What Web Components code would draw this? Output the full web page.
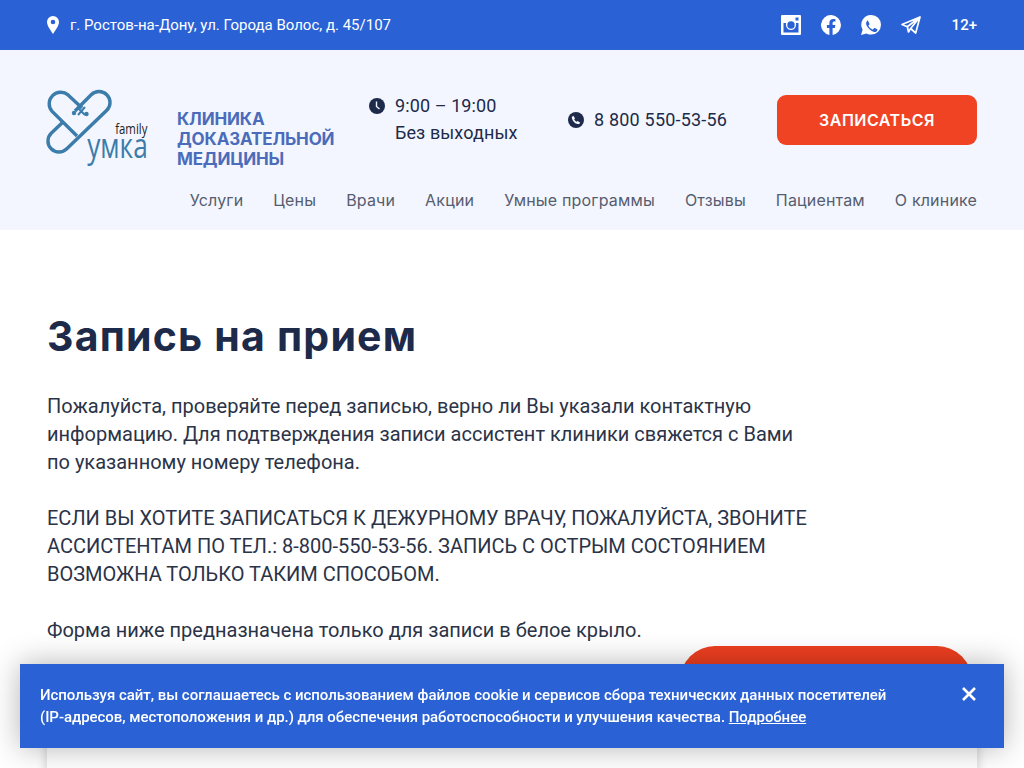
<!DOCTYPE html>
<html lang="ru">
<head>
<meta charset="utf-8">
<title>Запись на прием</title>
<style>
  html, body { margin: 0; height: 768px; overflow: hidden; background: #fff; }
  body { font-family: Roboto, "Liberation Sans", sans-serif; color: #1d2a4a; }
</style>
</head>
<body>
<top-bar></top-bar>
<site-header></site-header>
<main-content>
  <h1 slot="title">Запись на прием</h1>
  <p>Пожалуйста, проверяйте перед записью, верно ли Вы указали контактную информацию. Для подтверждения записи ассистент клиники свяжется с Вами по указанному номеру телефона.</p>
  <p>ЕСЛИ ВЫ ХОТИТЕ ЗАПИСАТЬСЯ К ДЕЖУРНОМУ ВРАЧУ, ПОЖАЛУЙСТА, ЗВОНИТЕ АССИСТЕНТАМ ПО ТЕЛ.: 8-800-550-53-56. ЗАПИСЬ С ОСТРЫМ СОСТОЯНИЕМ ВОЗМОЖНА ТОЛЬКО ТАКИМ СПОСОБОМ.</p>
  <p>Форма ниже предназначена только для записи в белое крыло.</p>
</main-content>
<cookie-banner>Используя сайт, вы соглашаетесь с использованием файлов cookie и сервисов сбора технических данных посетителей (IP-адресов, местоположения и др.) для обеспечения работоспособности и улучшения качества.</cookie-banner>

<script>
// small helper, every element just sets its shadow html once
class ShadowEl extends HTMLElement {
  constructor () {
    super()
    this.attachShadow({ mode: 'open' }).innerHTML = this.constructor.html
  }
}

customElements.define('top-bar', class extends ShadowEl {
  static html = `
  <style>
    :host { display: flex; align-items: center; height: 50px; padding: 0 47px; background: #2a62d6; color: #fff; font-size: 15px; }
    .addr { display: flex; align-items: center; gap: 11px; flex: 1; }
    .socials { display: flex; align-items: center; gap: 20px; }
    svg { display: block; }
    .age { margin-left: 11px; font-size: 15px; font-weight: 500; }
  </style>
  <div class="addr">
    <svg width="12" height="18" viewBox="0 0 12 18"><path fill="#fff" fill-rule="evenodd" d="M6 0a6 6 0 0 1 6 6c0 4-4 8.500-6 12C4 14.500 0 10 0 6a6 6 0 0 1 6-6zm0 3.700a2.300 2.300 0 1 0 0 4.600 2.300 2.300 0 0 0 0-4.600z"/></svg>
    <span>г. Ростов-на-Дону, ул. Города Волос, д. 45/107</span>
  </div>
  <div class="socials">
    <svg width="20" height="20" viewBox="0 0 20 20"><path fill="#fff" fill-rule="evenodd" d="M1 0h18a1 1 0 0 1 1 1v18a1 1 0 0 1-1 1H1a1 1 0 0 1-1-1V1a1 1 0 0 1 1-1zm1.500 8v9.500h15V8h-2.600a5.200 5.200 0 1 1-9.800 0zM10 6.300a3.700 3.700 0 1 0 0 7.400 3.700 3.700 0 0 0 0-7.400zM14.500 2.500v3h3v-3z"/></svg>
    <svg width="20" height="20" viewBox="0 0 20 20"><path fill="#fff" d="M20 10a10 10 0 1 0-11.600 9.900v-7H5.900V10h2.500V7.800c0-2.500 1.500-3.900 3.800-3.900 1.100 0 2.200.2 2.200.2v2.500h-1.200c-1.200 0-1.600.8-1.600 1.600V10h2.800l-.5 2.900h-2.300v7A10 10 0 0 0 20 10z"/></svg>
    <svg width="20" height="20" viewBox="0 0 20 20"><path fill="#fff" fill-rule="evenodd" d="M10.200 0a9.800 9.800 0 0 1 0 19.600c-1.700 0-3.300-.4-4.700-1.200L0 20l1.600-5.300A9.800 9.800 0 0 1 10.200 0zM7.300 5.200c-.3 0-.7.100-1 .5-.4.400-1.200 1.200-1.200 2.700 0 1.600 1.200 3.100 1.300 3.300.2.200 2.300 3.400 5.500 4.700 2.200.9 3.300.6 3.900-.1.500-.6.700-1.300.7-1.700 0-.3-.3-.4-.7-.6l-2-1c-.3-.1-.5-.2-.8.200l-.9 1.100c-.2.200-.4.300-.8.100-1.600-.7-2.900-1.800-3.800-3.300-.2-.4 0-.6.200-.8l.7-.9c.1-.2.100-.5 0-.7l-1-2.300c-.2-.5-.4-.5-.7-.5z"/></svg>
    <svg width="20" height="18" viewBox="0 0 20 18"><path fill="none" stroke="#fff" stroke-width="1.700" stroke-linejoin="round" d="M19 1 1 8.500l5.300 2.200L19 1l-9.400 11.500L14.700 17zM6.300 10.700 7.500 16l2.100-3.500"/></svg>
    <span class="age">12+</span>
  </div>`
})

customElements.define('site-logo', class extends ShadowEl {
  static html = `
  <style>
    :host { display: block; position: relative; width: 100px; height: 76px; color: #3b7cab; }
    svg { display: block; overflow: visible; }
    .family, .name { position: absolute; font-family: "Open Sans", sans-serif; transform-origin: right bottom; white-space: nowrap; }
    .family { top: 31px; right: 0; font-size: 15px; line-height: 14px; color: #222; transform: scaleX(.76); }
    .name { top: 46px; right: -1px; font-size: 35px; line-height: 18px; transform: scaleX(.75); }
  </style>
  <svg width="66" height="68" viewBox="0 0 66 68" fill="none" stroke="currentColor" stroke-width="3.400">
    <path d="M35 18 21.100 4.900A11.500 11.500 0 0 0 4.900 21.100L30 46"/>
    <path d="M28 21 44.200 4.700A11 11 0 0 1 59.800 20.300L19.800 58.800A11 11 0 0 1 4.200 43.200L16 32"/>
    <path d="M31 18 38 25M38 17 31 25" stroke-width="2"/>
    <circle cx="27" cy="23" r="2.200" fill="currentColor" stroke="none"/>
    <circle cx="39.500" cy="24" r="2.200" fill="currentColor" stroke="none"/>
  </svg>
  <span class="family">family</span>
  <span class="name">умка</span>`
})

customElements.define('site-header', class extends ShadowEl {
  static html = `
  <style>
    :host { display: block; height: 180px; box-sizing: border-box; padding: 40px 47px 0; background: #f3f6fe; }
    .row { display: flex; align-items: flex-start; height: 100px; }
    .slogan { margin: 19px 0 0 30px; width: 170px; font: 700 17px/20px Inter, sans-serif; letter-spacing: -.15px; color: #4a6cba; }
    .hours { margin: 2px 0 0 22px; width: 199px; font-size: 18px; line-height: 27px; letter-spacing: .1px; }
    .item { display: flex; align-items: center; gap: 10px; }
    .hours .sub { margin-left: 26px; }
    .phone { margin-top: 16px; width: 209px; font-size: 18px; line-height: 27px; letter-spacing: .2px; }
    .cta { margin-top: 5px; width: 200px; height: 50px; border-radius: 9px; background: #f04323; color: #fff; font: 600 16px/50px Inter, sans-serif; letter-spacing: .5px; text-align: center; }
    nav { display: flex; justify-content: flex-end; gap: 30px; font: 400 16px/20px Inter, sans-serif; letter-spacing: .17px; color: #565d70; }
    svg { display: block; flex: none; }
  </style>
  <div class="row">
    <site-logo></site-logo>
    <div class="slogan">КЛИНИКА ДОКАЗАТЕЛЬНОЙ МЕДИЦИНЫ</div>
    <div class="hours">
      <div class="item">
        <svg width="16" height="16" viewBox="0 0 16 16"><circle cx="8" cy="8" r="8" fill="#1d2a4a"/><path d="M7.500 3.500V8.500L10.500 11" fill="none" stroke="#f3f6fe" stroke-width="1.400"/></svg>
        <span>9:00 – 19:00</span>
      </div>
      <div class="sub">Без выходных</div>
    </div>
    <div class="phone item">
      <svg width="16" height="16" viewBox="0 0 16 16"><circle cx="8" cy="8" r="8" fill="#1d2a4a"/><path d="M5.300 3.800 7 6.300 6.200 7.500c.5 1 1.300 1.800 2.300 2.300l1.200-.8 2.500 1.700c-.4 1-1.300 1.700-2.400 1.400C6.800 11.500 4.500 9.200 3.900 6.200 3.600 5.100 4.300 4.200 5.300 3.800z" fill="#f3f6fe"/></svg>
      <span>8 800 550-53-56</span>
    </div>
    <div class="cta">ЗАПИСАТЬСЯ</div>
  </div>
  <nav>
    <span>Услуги</span><span>Цены</span><span>Врачи</span><span>Акции</span><span>Умные программы</span><span>Отзывы</span><span>Пациентам</span><span>О клинике</span>
  </nav>`
})

customElements.define('main-content', class extends ShadowEl {
  static html = `
  <style>
    :host { display: block; padding: 83px 47px 0; }
    ::slotted(h1) { margin: 0 0 33px; font: 700 41px/46px Inter, sans-serif; letter-spacing: 1.200px; color: #1d2a4a; }
    ::slotted(p) { margin: 0 0 28px; max-width: 770px; font-size: 20px; line-height: 28px; color: #2b3347; }
    .send { display: block; margin: -26px 5px 0 auto; width: 292px; height: 70px; border-radius: 35px; background: #ee3f20; }
    .card { margin-top: 20px; height: 200px; background: #fff; box-shadow: 0 0 10px rgba(0, 0, 0, .2); }
  </style>
  <slot name="title"></slot>
  <slot></slot>
  <div class="send"></div>
  <div class="card"></div>`
})

customElements.define('cookie-banner', class extends ShadowEl {
  static html = `
  <style>
    :host { position: fixed; left: 20px; right: 20px; bottom: 20px; height: 84px; box-sizing: border-box; padding: 20px 27px 0 20px; display: flex; justify-content: space-between; background: #2a62d6; color: #fff; font-size: 15px; font-weight: 500; line-height: 22px; letter-spacing: -.04px; box-shadow: 0 0 30px rgba(0, 0, 0, .3); }
    .text { width: 860px; }
    a { color: inherit; }
    svg { display: block; margin: 2px 0 0; }
  </style>
  <div class="text"><slot></slot> <a href="#">Подробнее</a></div>
  <svg width="16" height="16" viewBox="0 0 16 16"><path d="M2 2 14 14M14 2 2 14" stroke="#fff" stroke-width="2.600"/></svg>`
})
</script>
</body>
</html>
